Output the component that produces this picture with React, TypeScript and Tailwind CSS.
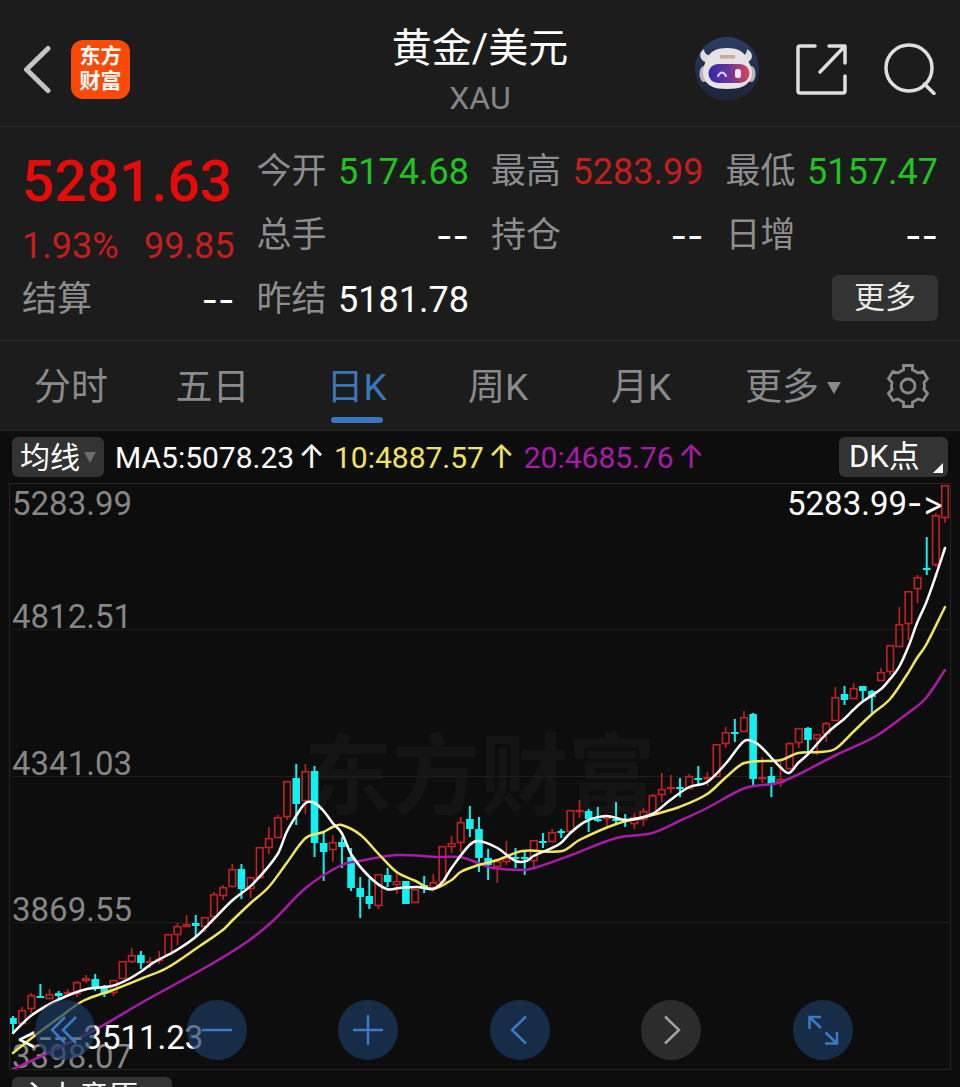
import type { ReactNode } from 'react'

type Candle = [kind: 'u' | 'd', top: number, bottom: number, high: number, low: number]

const FIRST_X = 13
const STEP = 9.147

const candles: Candle[] = [
  ['d', 1018, 1024, 1016, 1033], ['u', 1010, 1024, 1007, 1024], ['u', 995, 1009, 993, 1013],
  ['d', 996, 998, 984, 998], ['u', 994, 999, 989, 999], ['d', 993, 996, 991, 1000],
  ['u', 992, 994, 989, 994], ['u', 982, 994, 981, 997], ['u', 978, 981, 975, 983],
  ['d', 979, 987, 974, 991], ['d', 987, 994, 985, 997], ['u', 980, 993, 980, 996],
  ['u', 961, 979, 961, 979], ['u', 955, 962, 948, 963], ['d', 955, 963, 951, 969],
  ['u', 961, 963, 957, 968], ['u', 959, 961, 951, 964], ['u', 934, 955, 934, 955],
  ['u', 926, 935, 923, 945], ['u', 924, 927, 915, 927], ['d', 923, 926, 915, 938],
  ['u', 917, 927, 917, 932], ['u', 894, 917, 892, 917], ['u', 887, 896, 885, 900],
  ['u', 869, 887, 864, 887], ['d', 869, 889, 864, 899], ['u', 877, 889, 877, 898],
  ['u', 847, 878, 847, 878], ['u', 838, 848, 827, 854], ['u', 817, 838, 815, 838],
  ['u', 781, 817, 781, 820], ['d', 778, 804, 764, 825], ['u', 771, 801, 764, 814],
  ['d', 771, 843, 766, 857], ['d', 843, 852, 832, 881], ['u', 842, 850, 835, 862],
  ['d', 842, 847, 837, 868], ['d', 857, 888, 848, 891], ['d', 888, 897, 877, 918],
  ['d', 896, 904, 879, 909], ['u', 874, 906, 874, 909], ['d', 875, 882, 868, 887],
  ['u', 881, 885, 873, 894], ['d', 881, 904, 881, 904], ['u', 889, 903, 889, 903],
  ['d', 885, 887, 876, 893], ['u', 882, 888, 874, 892], ['u', 846, 882, 846, 882],
  ['u', 843, 847, 836, 853], ['u', 822, 843, 817, 852], ['d', 819, 829, 806, 837],
  ['d', 829, 858, 817, 872], ['d', 858, 865, 849, 880], ['u', 861, 867, 861, 883],
  ['u', 858, 862, 841, 865], ['d', 857, 859, 848, 868], ['d', 857, 859, 850, 875],
  ['u', 840, 861, 840, 868], ['d', 841, 843, 833, 848], ['u', 832, 842, 829, 842],
  ['d', 831, 833, 829, 838], ['u', 810, 832, 810, 832], ['u', 810, 812, 800, 818],
  ['d', 811, 819, 809, 832], ['d', 819, 821, 807, 822], ['u', 816, 819, 815, 827],
  ['d', 819, 821, 802, 824], ['d', 819, 821, 814, 827], ['u', 817, 824, 813, 829],
  ['u', 811, 820, 808, 826], ['u', 795, 815, 794, 815], ['u', 789, 795, 773, 802],
  ['u', 787, 789, 775, 793], ['d', 787, 789, 778, 797], ['u', 776, 789, 774, 789],
  ['d', 778, 780, 766, 784], ['u', 777, 779, 772, 786], ['u', 744, 777, 744, 777],
  ['u', 732, 744, 727, 748], ['d', 732, 734, 719, 742], ['u', 717, 732, 711, 732],
  ['d', 714, 779, 713, 786], ['u', 777, 779, 757, 783], ['d', 776, 785, 767, 797],
  ['u', 779, 783, 760, 787], ['u', 743, 769, 742, 770], ['u', 728, 743, 728, 748],
  ['d', 728, 740, 727, 753], ['u', 734, 739, 734, 755], ['u', 723, 734, 722, 742],
  ['u', 697, 721, 687, 721], ['d', 694, 700, 686, 705], ['u', 688, 699, 683, 699],
  ['d', 686, 691, 686, 701], ['d', 691, 697, 690, 713], ['u', 672, 681, 668, 681],
  ['u', 645, 672, 645, 675], ['u', 624, 647, 607, 647], ['u', 591, 624, 591, 640],
  ['u', 577, 589, 575, 603], ['d', 568, 570, 537, 575], ['u', 515, 565, 513, 567],
  ['u', 485, 518, 485, 523],
]

const ma5 =
  '13,1033 32,1015 60,999 87,989 112,986 127,980 142,971 153,963 177,950 197,936 214,919 233,900 253,884 278,854 287,832 297,815 306,803 315,803 324,811 333,823 342,833 352,855 370,877 387,889 400,888 418,887 433,889 443,882 452,868 470,845 479,841 498,848 516,861 527,861 534,856 560,844 572,832 587,821 607,816 627,820 653,814 671,800 690,787 708,782 727,763 745,741 755,742 763,748 782,768 790,773 799,763 808,755 827,734 836,726 845,719 854,710 863,702 882,689 891,679 900,667 910,645 918,623 927,603 937,575 946,548'
const ma10 =
  '13,1053 33,1037 60,1017 83,1001 113,990 143,978 167,968 200,946 223,930 232,921 251,903 269,887 287,863 306,838 324,832 333,827 342,825 361,835 379,854 397,872 416,881 433,889 452,880 461,872 479,865 498,860 523,851 563,851 580,840 617,824 653,815 680,807 708,794 727,777 745,763 782,760 799,753 820,752 836,749 854,732 873,714 891,699 909,673 918,658 927,645 946,607'
const ma20 =
  '13,1069 33,1060 93,1031 143,1002 210,965 247,942 273,921 306,888 342,865 360,861 397,855 440,857 460,857 479,863 493,868 523,870 535,868 572,855 617,838 653,833 680,821 708,808 746,788 782,782 837,755 877,736 909,713 927,698 946,670'

function smooth(list: string) {
  const p = list.split(' ').map((s) => s.split(',').map(Number))
  let d = `M${p[0][0]} ${p[0][1]}`
  for (let i = 0; i < p.length - 1; i++) {
    const a = p[Math.max(i - 1, 0)]
    const b = p[i]
    const c = p[i + 1]
    const e = p[Math.min(i + 2, p.length - 1)]
    const k = (c[0] - b[0]) / 3
    const m1 = (c[1] - a[1]) / (c[0] - a[0])
    const m2 = (e[1] - b[1]) / (e[0] - b[0])
    d += `C${b[0] + k} ${b[1] + k * m1} ${c[0] - k} ${c[1] - k * m2} ${c[0]} ${c[1]}`
  }
  return d
}

function KLine() {
  return (
    <svg
      className="absolute inset-0 h-full w-full"
      viewBox="10 484 941 585"
      preserveAspectRatio="none"
      role="img"
      aria-label="日K"
    >
      {candles.map(([kind, top, bottom, high, low], i) => {
        const x = FIRST_X + i * STEP
        if (kind === 'd') {
          return (
            <g key={i} fill="#12f0f0">
              <rect x={x - 1} y={high} width={2} height={low - high} />
              <rect x={x - 3.8} y={top} width={7.6} height={bottom - top} />
            </g>
          )
        }
        return (
          <g key={i} stroke="#c42222" strokeWidth={1.6} fill="none">
            {high < top && <line x1={x} x2={x} y1={high} y2={top} />}
            {low > bottom && <line x1={x} x2={x} y1={bottom} y2={low} />}
            <rect x={x - 3.3} y={top + 0.7} width={6.6} height={Math.max(bottom - top - 1.2, 0.6)} />
          </g>
        )
      })}
      <g fill="none" strokeLinejoin="round" strokeLinecap="round" strokeWidth={2.5}>
        <path d={smooth(ma20)} stroke="#a81ca8" />
        <path d={smooth(ma10)} stroke="#f0e562" />
        <path d={smooth(ma5)} stroke="#ffffff" />
      </g>
    </svg>
  )
}

function Robot() {
  return (
    <svg viewBox="0 0 64 64" className="h-16 w-16" aria-hidden="true">
      <defs>
        <linearGradient id="visor" x1="0" x2="1">
          <stop offset="0" stopColor="#2f2aa8" />
          <stop offset="0.5" stopColor="#6b3596" />
          <stop offset="1" stopColor="#d8455c" />
        </linearGradient>
        <linearGradient id="disc" x1="0" x2="0" y1="0" y2="1">
          <stop offset="0" stopColor="#2b3d63" />
          <stop offset="1" stopColor="#1c2436" />
        </linearGradient>
      </defs>
      <circle cx="32" cy="32" r="32" fill="url(#disc)" />
      <path d="M9 12C3 16 4 24 13 26l5-7c-6 0-9-3-9-7zM52 12c7 4 7 12-2 14l-5-7c5 0 7-3 7-7z" fill="#dedade" />
      <ellipse cx="9" cy="37" rx="4.500" ry="8" fill="#b9b3bd" />
      <ellipse cx="56" cy="37" rx="4.500" ry="8" fill="#b9b3bd" />
      <path d="M32 11c12 0 18 4 21 13 4 6 5 12 3 17-3 8-11 11-24 11s-20-3-23-11c-2-5-1-11 2-17 3-9 9-13 21-13z" fill="#e6e2e6" />
      <path d="M25 18h15v3.500H25z" fill="#c4ae92" />
      <rect x="13.500" y="27" width="41" height="19" rx="9.500" fill="url(#visor)" />
      <path d="M23 39q4-7 8 0" fill="none" stroke="#d5d8ff" strokeWidth="2" strokeLinecap="round" />
      <rect x="40" y="32" width="6" height="9" rx="2.500" fill="#ffe6ee" />
    </svg>
  )
}

function Stat({ label, value, tone }: { label: string; value: string; tone?: string }) {
  return (
    <div className="flex h-16 items-center justify-between">
      <dt className="text-[35px] text-[#8d8d8f]">{label}</dt>
      {value === '--' ? (
        <dd className="font-['Inter',sans-serif] text-white">--</dd>
      ) : (
        <dd className={tone ?? 'text-white'}>{value}</dd>
      )}
    </div>
  )
}

function Tab({ children, active }: { children: ReactNode; active?: boolean }) {
  return (
    <button
      type="button"
      role="tab"
      aria-selected={!!active}
      className={`flex h-full flex-col items-center ${active ? 'text-[#3a76bb]' : 'text-[#8a8a8c]'}`}
    >
      <span className="flex h-[76px] items-center pt-[18px] whitespace-nowrap">{children}</span>
      {active && <span className="h-[6px] w-[52px] rounded-full bg-[#3a76bb]" />}
    </button>
  )
}

function Average({ text, className }: { text: string; className: string }) {
  return (
    <span className={`flex items-center gap-1 ${className}`}>
      {text}
      <span className="font-['Inter',sans-serif] text-[32px] leading-10">↑</span>
    </span>
  )
}

function RoundButton({ label, muted, children }: { label: string; muted?: boolean; children: ReactNode }) {
  return (
    <button
      type="button"
      aria-label={label}
      className={`h-[60px] w-[60px] rounded-full ${
        muted ? 'bg-[#2c2c2c] text-[#a2a2a2]' : 'bg-[#1b3a61]/70 text-[#3b7ac4]'
      }`}
    >
      <svg viewBox="0 0 60 60" className="h-full w-full" fill="none" stroke="currentColor" strokeWidth="2.500" aria-hidden="true">
        {children}
      </svg>
    </button>
  )
}

export default function App() {
  return (
    <div className="flex h-screen flex-col overflow-hidden bg-[#0d0d0d] font-['Roboto','Noto_Sans_CJK_SC',sans-serif] text-white">
      <header className="grid h-[127px] shrink-0 grid-cols-[1fr_auto_1fr] items-center border-b border-[#2b2b2b] bg-[#1c1c1c]">
        <div className="flex items-center gap-5 pt-3 pl-[22px]">
          <button type="button" aria-label="返回">
            <svg viewBox="0 0 29 50" className="h-[50px] w-[29px]" fill="none" stroke="#c4c4c4" strokeWidth="5" strokeLinecap="round" strokeLinejoin="round" aria-hidden="true">
              <path d="M26 4.500L4.500 25.500L26 46.500" />
            </svg>
          </button>
          <div className="flex h-[59px] w-[59px] flex-col items-center justify-center rounded-xl bg-[#fb4a07] text-[21px] leading-[25px] font-bold">
            <span>东方</span>
            <span>财富</span>
          </div>
        </div>
        <div className="flex flex-col items-center pt-4">
          <h1 className="text-[40px] leading-[54px] font-normal">黄金/美元</h1>
          <p className="text-[32px] leading-[44px] text-[#858587]">XAU</p>
        </div>
        <div className="flex items-center justify-end gap-[37px] pt-3 pr-6">
          <button type="button" aria-label="智能助手">
            <Robot />
          </button>
          <button type="button" aria-label="分享">
            <svg viewBox="0 0 51 51" className="h-[51px] w-[51px]" fill="none" stroke="#dedede" strokeWidth="3.500" strokeLinecap="round" strokeLinejoin="round" aria-hidden="true">
              <path d="M19 2H4q-2 0-2 2v43q0 2 2 2h43q2 0 2-2V32M33 2h16v17M48 3L24 28" />
            </svg>
          </button>
          <button type="button" aria-label="搜索">
            <svg viewBox="0 0 52 52" className="h-[52px] w-[52px]" fill="none" stroke="#dedede" strokeWidth="3.500" strokeLinecap="round" aria-hidden="true">
              <circle cx="25" cy="25" r="23" />
              <path d="M40.500 41L50 50.500" />
            </svg>
          </button>
        </div>
      </header>

      <dl className="grid h-[214px] shrink-0 grid-cols-4 grid-rows-[64px_64px_64px] gap-x-[22px] border-b border-[#2b2b2b] bg-[#1c1c1c] px-[22px] pt-[13px] text-[36px]">
        <div className="row-span-2">
          <dt className="flex h-[84px] items-center text-[57px] font-medium text-[#e60b0b]">5281.63</dt>
          <dd className="flex h-[44px] items-center justify-between text-[#c81d1d]">
            <span>1.93%</span>
            <span>99.85</span>
          </dd>
        </div>
        <Stat label="今开" value="5174.68" tone="text-[#21c321]" />
        <Stat label="最高" value="5283.99" tone="text-[#c81d1d]" />
        <Stat label="最低" value="5157.47" tone="text-[#21c321]" />
        <Stat label="总手" value="--" />
        <Stat label="持仓" value="--" />
        <Stat label="日增" value="--" />
        <Stat label="结算" value="--" />
        <Stat label="昨结" value="5181.78" />
        <div className="col-start-4 flex h-[60px] items-center justify-end">
          <button type="button" className="flex h-[46px] w-[106px] items-center justify-center rounded-md bg-[#333333] text-[31px] text-[#e8e8e8]">
            更多
          </button>
        </div>
      </dl>

      <nav className="grid h-[90px] shrink-0 grid-cols-[142fr_141fr_147fr_136fr_150fr_154fr_90fr] border-b border-[#262626] bg-[#1c1c1c] text-[37px]" role="tablist">
        <Tab>分时</Tab>
        <Tab>五日</Tab>
        <Tab active>日K</Tab>
        <Tab>周K</Tab>
        <Tab>月K</Tab>
        <Tab>
          更多
          <svg viewBox="0 0 14 12" className="ml-2 h-3 w-[14px]" fill="currentColor" aria-hidden="true">
            <path d="M0 0h14L7 12z" />
          </svg>
        </Tab>
        <button type="button" aria-label="设置" className="flex items-center pl-4 text-[#8a8a8c]">
          <svg viewBox="0 0 44 46" className="h-[46px] w-11" fill="none" stroke="currentColor" strokeWidth="2.800" strokeLinejoin="miter" aria-hidden="true">
            <path d="M17.500 2.500h9v4.500q3 1 5.500 3l5-1.500 4.500 7-3.500 4q1 3.500 0 7l3.500 4-4.500 7-5-1.500q-2.500 2-5.500 3v4.500h-9v-4.500q-3-1-5.500-3l-5 1.500-4.500-7 3.500-4q-1-3.500 0-7l-3.500-4 4.500-7 5 1.500q2.500-2 5.500-3z" />
            <circle cx="22" cy="23" r="7" />
          </svg>
        </button>
      </nav>

      <div className="flex h-[52px] shrink-0 items-center pr-3 pl-3 text-[30px]">
        <button type="button" className="flex h-10 w-[92px] shrink-0 items-center justify-center gap-1 rounded-md bg-[#333333]">
          均线
          <svg viewBox="0 0 12 11" className="h-[11px] w-3" fill="#6c6c6c" aria-hidden="true">
            <path d="M0 0h12L6 11z" />
          </svg>
        </button>
        <div className="flex grow gap-[9px] pl-[11px] whitespace-nowrap">
          <Average text="MA5:5078.23" className="text-white" />
          <Average text="10:4887.57" className="text-[#f0e562]" />
          <Average text="20:4685.76" className="text-[#a81ca8]" />
        </div>
        <button type="button" className="flex h-10 w-[109px] shrink-0 items-center justify-between rounded-md bg-[#333333] pr-[5px] pl-[10px] text-[31px]">
          DK点
          <svg viewBox="0 0 10 10" className="mb-1 h-[10px] w-[10px] self-end" fill="#ffffff" aria-hidden="true">
            <path d="M10 0v10H0z" />
          </svg>
        </button>
      </div>

      <main className="relative mr-[9px] ml-[9px] h-[587px] shrink-0 border border-[#262626]">
        <div className="absolute inset-0 flex items-center justify-center text-[88px] font-bold text-[#141414]">
          东方财富
        </div>
        <div className="absolute inset-0 grid grid-rows-4 pl-[2px] text-[33px] leading-6 text-[#868686]">
          <div className="flex flex-col justify-between border-b border-[#1e1e1e] pt-2">
            <span>5283.99</span>
            <span>4812.51</span>
          </div>
          <div className="flex items-end border-b border-[#1e1e1e]">4341.03</div>
          <div className="flex items-end border-b border-[#1e1e1e]">3869.55</div>
          <div className="flex items-end">3398.07</div>
        </div>
        <KLine />
        <div className="absolute top-0 right-[6px] text-[33px] leading-[38px]">
          5283.99<span className="font-['Inter',sans-serif] [font-variant-ligatures:none]">-&gt;</span>
        </div>
        <div className="absolute bottom-3 left-[6px] text-[33px] leading-[38px]">
          <span className="font-['Inter',sans-serif] [font-variant-ligatures:none]">&lt;---</span>3511.23
        </div>
        <div className="absolute right-[97px] bottom-[9px] left-[25px] flex justify-between">
          <RoundButton label="最左">
            <path d="M30 17L17 30L30 43M41 17L28 30L41 43" />
          </RoundButton>
          <RoundButton label="缩小">
            <path d="M15 30h30" />
          </RoundButton>
          <RoundButton label="放大">
            <path d="M15 30h30M30 15v30" />
          </RoundButton>
          <RoundButton label="左移">
            <path d="M36 16.500L22 30L36 43.500" />
          </RoundButton>
          <RoundButton label="右移" muted>
            <path d="M24 16.500L38 30L24 43.500" />
          </RoundButton>
          <RoundButton label="全屏">
            <path d="M28 17H16.500V29M17 17.500L28 28M32 43.500H44V32M43.500 43L32.500 32.500" />
          </RoundButton>
        </div>
      </main>

      <div className="shrink-0 px-3 pt-[7px]">
        <button type="button" className="flex h-10 w-[160px] items-center rounded-md bg-[#333333] pl-[7px] text-[30px] leading-9">
          主力意愿
        </button>
      </div>
    </div>
  )
}
